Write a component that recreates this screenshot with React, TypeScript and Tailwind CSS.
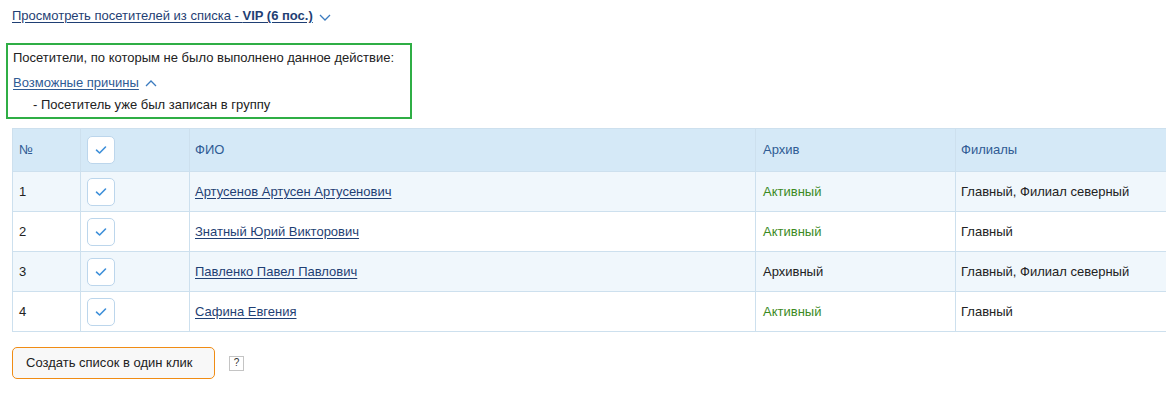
import React from "react";

const Check = () => (
  <svg width="12" height="10" viewBox="0 0 12 10" fill="none">
    <path d="M1.5 5.2 L4.6 8 L10.5 2" stroke="#3d8fd9" strokeWidth="1.6" strokeLinecap="round" strokeLinejoin="round" />
  </svg>
);

const Box = () => (
  <div className="w-[28px] h-[28px] rounded-[5px] border border-[#bcd6ec] bg-white flex items-center justify-center">
    <Check />
  </div>
);

const Chevron = ({ up }: { up?: boolean }) => (
  <svg width="12" height="8" viewBox="0 0 12 8" fill="none" className="ml-[6px]">
    {up ? (
      <path d="M1 7 L6 2 L11 7" stroke="#3b7bbf" strokeWidth="1.3" />
    ) : (
      <path d="M1 2 L6 7 L11 2" stroke="#3b7bbf" strokeWidth="1.3" />
    )}
  </svg>
);

const rows = [
  { n: "1", name: "Артусенов Артусен Артусенович", active: true, fil: "Главный, Филиал северный" },
  { n: "2", name: "Знатный Юрий Викторович", active: true, fil: "Главный" },
  { n: "3", name: "Павленко Павел Павлович", active: false, fil: "Главный, Филиал северный" },
  { n: "4", name: "Сафина Евгения", active: true, fil: "Главный" },
];

export default function App() {
  return (
    <div className="w-[1166px] h-[393px] bg-white overflow-hidden text-[13px] text-[#222]" style={{ fontFamily: '"Liberation Sans", Arial, sans-serif' }}>
      <div className="pl-[12px] pt-[7px] h-[43px] flex items-start">
        <a className="text-[#1f3f74] underline underline-offset-2 leading-[18px]">
          Просмотреть посетителей из списка - <b>VIP (6 пос.)</b>
        </a>
        <span className="mt-[6px]"><Chevron /></span>
      </div>
      <div className="ml-[6px] w-[406px] h-[76px] border-2 border-[#2fae45] pl-[5px] pt-[4px]">
        <div className="leading-[18px]">Посетители, по которым не было выполнено данное действие:</div>
        <div className="flex items-center mt-[7px] leading-[18px]">
          <a className="text-[#2f5b94] underline underline-offset-2">Возможные причины</a>
          <Chevron up />
        </div>
        <div className="pl-[20px] mt-[4px] leading-[18px]">- Посетитель уже был записан в группу</div>
      </div>
      <div className="ml-[12px] mt-[9px]">
        <table className="border-collapse w-[1160px]">
          <thead>
            <tr className="bg-[#d5e9f7] h-[43px]">
              <th className="w-[68px] font-normal text-left pl-[6px] text-[#2f5b94] border border-[#cde0ee]">№</th>
              <th className="w-[109px] font-normal text-left pl-[6px] border border-[#cde0ee]"><Box /></th>
              <th className="w-[566px] font-normal text-left pl-[5px] text-[#2f5b94] border border-[#cde0ee]">ФИО</th>
              <th className="w-[200px] font-normal text-left pl-[7px] text-[#2f5b94] border border-[#cde0ee]">Архив</th>
              <th className="font-normal text-left pl-[5px] text-[#2f5b94] border border-[#cde0ee]">Филиалы</th>
            </tr>
          </thead>
          <tbody>
            {rows.map((r, i) => (
              <tr key={r.n} className={`h-[40px] ${i % 2 === 0 ? "bg-[#f0f7fc]" : "bg-white"}`}>
                <td className="pl-[6px] border border-[#cde0ee]">{r.n}</td>
                <td className="pl-[6px] border border-[#cde0ee]"><Box /></td>
                <td className="pl-[5px] border border-[#cde0ee]">
                  <a className="text-[#1f3f74] underline underline-offset-2">{r.name}</a>
                </td>
                <td className={`pl-[7px] border border-[#cde0ee] ${r.active ? "text-[#3b8a1e]" : "text-[#222]"}`}>
                  {r.active ? "Активный" : "Архивный"}
                </td>
                <td className="pl-[5px] border border-[#cde0ee]">{r.fil}</td>
              </tr>
            ))}
          </tbody>
        </table>
      </div>
      <div className="ml-[12px] mt-[15px] flex items-center">
        <button className="w-[203px] h-[32px] rounded-[5px] border border-[#f08c14] bg-[#f8f8f8] text-left pl-[13px] text-[13px] text-[#222]">
          Создать список в один клик
        </button>
        <div className="ml-[14px] w-[15px] h-[15px] border border-[#c4c4c4] flex items-center justify-center text-[10px] leading-none text-[#333]">?</div>
      </div>
    </div>
  );
}
